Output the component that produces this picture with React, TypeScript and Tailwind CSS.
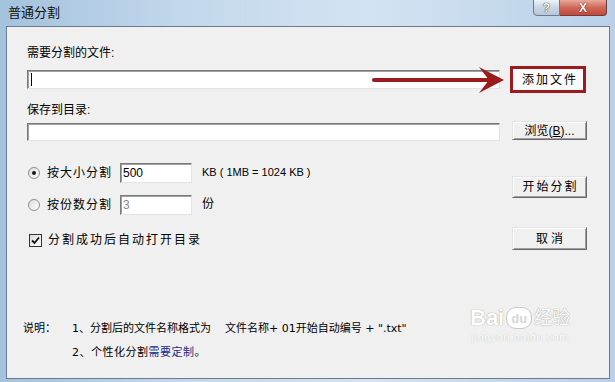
import React from "react";

function Radio({ checked }: { checked?: boolean }) {
  return (
    <div className="w-[12px] h-[12px] rounded-full border border-[#8e8f8f] bg-[linear-gradient(135deg,#dcdcdc,#ffffff)] flex items-center justify-center shrink-0">
      {checked && <div className="w-[4px] h-[4px] rounded-full bg-[#1a1a1a]" />}
    </div>
  );
}

function ClassicButton({ children, className = "" }: { children: React.ReactNode; className?: string }) {
  return (
    <div
      className={
        "w-[75px] flex items-center justify-center bg-[#f0f0f0] border border-t-[#e3e3e3] border-l-[#e3e3e3] border-r-[#696969] border-b-[#696969] shadow-[inset_1px_1px_0_#ffffff,inset_-1px_-1px_0_#a0a0a0] " +
        className
      }
    >
      {children}
    </div>
  );
}

function SunkenInput({ className = "", children }: { className?: string; children?: React.ReactNode }) {
  return (
    <div
      className={
        "bg-white border border-t-[#7a7a7a] border-l-[#7a7a7a] border-b-[#e3e3e3] border-r-[#e3e3e3] shadow-[inset_1px_1px_0_#a0a0a0] flex items-center " +
        className
      }
    >
      {children}
    </div>
  );
}

export default function App() {
  return (
    <div className="relative w-[615px] h-[382px] overflow-hidden bg-[linear-gradient(90deg,#a3c2dc,#c3d8ec_30%,#d3e3f2_60%,#b9d0e8)] font-['Liberation_Sans','Noto_Sans_CJK_SC',sans-serif] text-[12px] text-black">
      {/* Title bar */}
      <div className="h-[26px] flex items-start justify-between pl-[8px] pr-[8px]">
        <div className="mt-[4px] text-[13px] leading-[17px] text-[#111]">普通分割</div>
        <div className="flex h-[17px] -mt-[1px]">
          <div className="w-[27px] h-full flex items-center justify-center rounded-bl-[4px] border border-[#6d7b8d] bg-[linear-gradient(180deg,#eef3f8,#c9d6e4_50%,#b7c7da)] text-[12px] font-bold text-white [text-shadow:0_0_1px_#333,0_0_1px_#333]">
            ?
          </div>
          <div className="w-[47px] h-full flex items-center justify-center rounded-br-[4px] border border-l-0 border-[#6d3b3b] bg-[linear-gradient(180deg,#e9a99c,#d0685a_50%,#c24a3a)] text-[12px] font-bold text-white [text-shadow:0_0_1px_#4a1a1a,0_0_1px_#4a1a1a]">
            X
          </div>
        </div>
      </div>

      {/* Client area */}
      <div className="ml-[6px] w-[604px] h-[353px] border border-[#6b7a8c] bg-[#f0f0f0] flex flex-col pl-[20px] pr-[22px]">
        <div className="mt-[18px] leading-[16px]">需要分割的文件:</div>
        <div className="mt-[5px] h-[27px] flex items-center">
          <SunkenInput className="w-[473px] h-[19px] pl-[3px]">
            <div className="w-[1px] h-[13px] bg-black" />
          </SunkenInput>
          <div className="ml-[10px] w-[76px] h-[27px] border-[3px] border-[#9b1b1e] bg-[#fbfbfb] flex items-center justify-center tracking-[2px] pl-[4px]">
            添加文件
          </div>
        </div>
        <div className="mt-[9px] leading-[16px]">保存到目录:</div>
        <div className="mt-[3px] h-[20px] flex items-start">
          <SunkenInput className="w-[473px] h-[18px] mt-[2px]" />
          <ClassicButton className="ml-[12px] h-[19px] text-[12px]">
            <span>
              浏览(<span className="underline">B</span>)...
            </span>
          </ClassicButton>
        </div>

        <div className="flex">
          <div className="flex-1 flex flex-col">
            <div className="mt-[22px] h-[20px] flex items-center">
              <div className="ml-[1px]">
                <Radio checked />
              </div>
              <div className="ml-[7px] w-[73px] tracking-[1px]">按大小分割</div>
              <SunkenInput className="w-[72px] h-[20px] pl-[2px] text-[12px]">500</SunkenInput>
              <div className="ml-[10px] text-[11px] self-start mt-[1px]">KB ( 1MB = 1024 KB )</div>
            </div>
            <div className="mt-[12px] h-[20px] flex items-center">
              <div className="ml-[1px]">
                <Radio />
              </div>
              <div className="ml-[7px] w-[73px] tracking-[1px]">按份数分割</div>
              <SunkenInput className="w-[72px] h-[20px] pl-[2px] text-[12px] text-[#8a8a8a] bg-[#fafafa]">3</SunkenInput>
              <div className="ml-[10px] self-start">份</div>
            </div>
            <div className="mt-[18px] h-[14px] flex items-center">
              <div className="ml-[2px] w-[13px] h-[13px] border border-[#333] bg-[linear-gradient(135deg,#d8d8d8,#ffffff)] flex items-center justify-center shrink-0">
                <svg width="9" height="9" viewBox="0 0 9 9">
                  <path d="M1 4.5 L3.5 7 L8 1.5" stroke="#111" strokeWidth="1.8" fill="none" />
                </svg>
              </div>
              <div className="ml-[6px] tracking-[2px]">分割成功后自动打开目录</div>
            </div>
          </div>
          <div className="w-[75px] flex flex-col">
            <ClassicButton className="mt-[35px] h-[22px] tracking-[2px] pl-[2px]">开始分割</ClassicButton>
            <ClassicButton className="mt-[29px] h-[23px] tracking-[3px] pl-[3px]">取消</ClassicButton>
          </div>
        </div>

        <div className="mt-auto pb-[17px] -ml-[4px] flex text-[11px] leading-[16px] font-['DejaVu_Sans','Noto_Sans_CJK_SC',sans-serif]">
          <div className="w-[49px]">说明：</div>
          <div className="flex flex-col gap-[8px]">
            <div className="whitespace-pre">
              1、分割后的文件名称格式为<span className="ml-[14px]">文件名称+ 01开始自动编号 + ".txt"</span>
            </div>
            <div className="tracking-[0.5px]">
              2、个性化分割<span className="text-[#1a2a8a]">需要定制</span>。
            </div>
          </div>
        </div>
      </div>

      {/* Annotation arrow overlay */}
      <svg className="absolute left-0 top-0 pointer-events-none" width="615" height="382">
        <line x1="374" y1="80" x2="492" y2="80" stroke="#9b1b1e" strokeWidth="4" strokeLinecap="round" />
        <path d="M479 67 L504 80 L479 93 L489 80 Z" fill="#9b1b1e" />
      </svg>

      {/* Watermark overlay */}
      <div className="absolute left-[470px] top-[306px] flex flex-col items-center text-white pointer-events-none">
        <div className="flex items-center gap-[2px]">
          <span className="text-[22px] font-bold leading-[24px] font-['Liberation_Sans',sans-serif] [text-shadow:0_0_1px_#a8a8a8,0_0_1px_#a8a8a8]">Bai</span>
          <span className="w-[26px] h-[22px] rounded-[10px] bg-white border border-[#c8c8c8] flex items-center justify-center text-[13px] font-bold leading-none text-[#d8d8d8]">
            du
          </span>
          <span className="text-[18px] leading-[24px] [text-shadow:0_0_1px_#a8a8a8,0_0_1px_#a8a8a8]">经验</span>
        </div>
        <div className="text-[11px] leading-[14px] tracking-[0.5px] [text-shadow:0_0_1px_#b0b0b0]">jingyan.baidu.com</div>
      </div>
    </div>
  );
}
